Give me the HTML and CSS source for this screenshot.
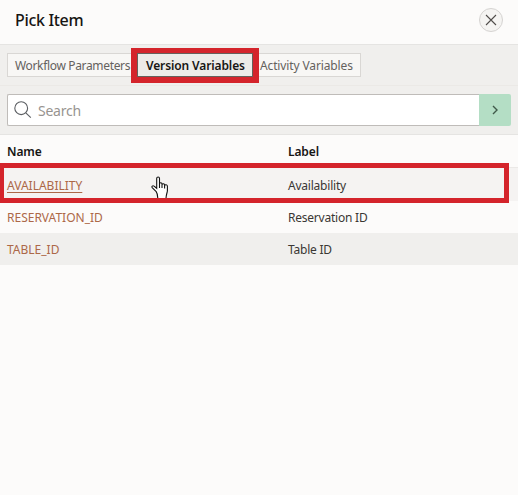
FILE: index.html
```html
<!DOCTYPE html>
<html lang="en">
<head>
<meta charset="utf-8">
<title>Pick Item</title>
<link rel="stylesheet" href="styles.css">
</head>
<body>
<main class="dialog">
  <header class="header">
    <h1>Pick Item</h1>
    <button class="close" aria-label="Close">
      <svg width="12" height="12" viewBox="0 0 12 12"><path d="M1 1l10 10M11 1L1 11"/></svg>
    </button>
  </header>
  <nav class="tabs">
    <button class="tab first">Workflow Parameters</button>
    <button class="tab active">Version Variables<i class="mark mark-tab"></i></button>
    <button class="tab last">Activity Variables</button>
  </nav>
  <div class="search">
    <div class="field">
      <svg width="18" height="18" viewBox="0 0 18 18"><circle cx="7.2" cy="7.2" r="6.4"/><path d="M11.8 11.8l5 4.8"/></svg>
      <span class="placeholder">Search</span>
    </div>
    <button class="go" aria-label="Go">
      <svg width="6" height="10" viewBox="0 0 6 10"><path d="M1 1l4 4-4 4"/></svg>
    </button>
  </div>
  <section class="list">
    <div class="row head"><b>Name</b><b>Label</b></div>
    <div class="row hover">
      <a>AVAILABILITY</a><span>Availability</span>
      <svg class="cursor" width="20" height="22" viewBox="0 0 20 22"><path d="M6.2 15.6L2.2 11.6C1.2 10.4 2.8 9.2 4 10.1L6.7 12.3V2.6C6.7.5 9.5.5 9.5 2.6V8C9.6 6.3 12 6.4 12 8.1V8.8C12.2 7.2 14.6 7.4 14.6 9V9.6C15 8.3 17.4 8.5 17.4 10.3V14.4C17.4 17 16 18 16 23H7.8C7.8 18.6 7.2 17 6.2 15.6ZM9.5 7.5V12M12 8.5V12M14.6 9.3V12.4"/></svg>
      <i class="mark mark-row"></i>
    </div>
    <div class="row"><a>RESERVATION_ID</a><span>Reservation ID</span></div>
    <div class="row alt"><a>TABLE_ID</a><span>Table ID</span></div>
  </section>
</main>
</body>
</html>
```
FILE: styles.css
```css
* { box-sizing: border-box; }
body { margin: 0; background: #fcfbfa; color: #3a3734; font: 12px/16px "Noto Sans", sans-serif; }
button { font: inherit; padding: 0; margin: 0; }
svg { fill: none; display: block; }
.dialog { height: 495px; overflow: hidden; }
.header { height: 45px; display: flex; align-items: center; justify-content: space-between; padding: 0 15px 4px; border-bottom: 1px solid #e5e4e2; }
h1 { margin: 0; font-size: 16px; line-height: 24px; font-weight: 500; letter-spacing: -0.32px; color: #161513; }
.close { width: 24px; height: 24px; border: 1px solid #d5d3d1; border-radius: 50%; background: #f5f4f2; display: grid; place-items: center; }
.close svg { stroke: #504d4a; stroke-width: 1.1; }
.tabs { height: 41px; padding: 8px 7px; background: #f0efed; border-bottom: 1px solid #ebe9e6; display: flex; }
.tab { height: 24px; border: 1px solid #d9d7d4; background: #f8f7f5; color: #65625e; text-align: left; padding: 2px 0 0 7px; white-space: nowrap; letter-spacing: -0.13px; }
.first { width: 130px; letter-spacing: -0.34px; }
.active { width: 116px; position: relative; border-color: #65605b; background: #edebe8; color: #161513; font-weight: 600; padding-left: 8px; letter-spacing: -0.12px; }
.last { width: 108px; padding-left: 6px; }
.mark { position: absolute; border: 5px solid #d4242b; pointer-events: none; }
.mark-tab { inset: -6px -7px -7px; border-width: 5px 6px 6px; }
.search { height: 49px; padding: 8px 7px; background: #f0efed; border-bottom: 1px solid #e5e4e2; display: flex; }
.field { flex: 1; height: 32px; border: 1px solid #bfbcb9; border-right: 0; border-radius: 2px 0 0 2px; background: #fff; display: flex; align-items: center; gap: 6px; padding-left: 6px; }
.field svg { stroke: #5b5e62; stroke-width: 1.1; }
.placeholder { font-size: 14px; color: #989490; line-height: 20px; padding-top: 2px; letter-spacing: -0.25px; }
.go { width: 32px; height: 32px; border: 0; border-radius: 0 2px 2px 0; background: #b4dec5; display: grid; place-items: center; }
.go svg { stroke: #40594a; stroke-width: 1.4; }
.row { height: 32px; display: grid; grid-template-columns: 281px 1fr; align-items: center; padding: 2px 0 0 7px; position: relative; letter-spacing: -0.22px; }
.head { height: 33px; border-bottom: 1px solid #ebe9e7; color: #161513; letter-spacing: -0.1px; }
.hover { height: 33px; background: #f5f3f2; }
.alt { background: #f0efed; }
b { font-weight: 600; }
a { color: #ac6848; letter-spacing: 0; }
.hover a { text-decoration: underline; text-underline-offset: 2px; }
.mark-row { left: -1px; top: -5px; width: 510px; height: 40px; }
.cursor { position: absolute; left: 150px; top: 8px; fill: #fff; stroke: #111; stroke-width: 1.1; }
```
